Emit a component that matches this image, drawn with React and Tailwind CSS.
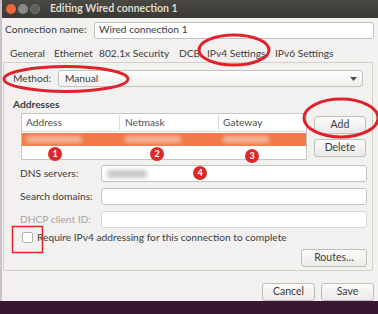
import React from 'react'

const font = { fontFamily: 'Lato, "Open Sans", sans-serif' }

const Field = ({ className = '', children }) => (
  <div className={`h-[17px] rounded-[3px] border border-[#c4c2bd] bg-white ${className}`}>{children}</div>
)

const Button = ({ children, className = '' }) => (
  <div
    className={`flex h-[18px] items-center justify-center rounded-[3px] border border-[#c0beb9] bg-gradient-to-b from-[#fbfbfa] to-[#ebeae8] text-[10.5px] text-[#3c3c3c] ${className}`}
  >
    {children}
  </div>
)

const Marker = ({ n, className }) => (
  <div
    className={`absolute flex h-[14px] w-[14px] items-center justify-center rounded-full bg-[#dc2a2a] text-[9px] font-bold text-white ${className}`}
  >
    {n}
  </div>
)

export default function App() {
  return (
    <div className="relative h-[314px] w-[378px] overflow-hidden whitespace-nowrap bg-[#3b1630]" style={font}>
      <div className="flex h-[301px] flex-col border-l-[2px] border-[#c9c3c8] bg-[#f2f1f0] text-[10.2px] text-[#3c3c3c]">
        {/* title bar */}
        <div className="flex h-[18px] items-center bg-gradient-to-b from-[#4a4944] to-[#3a3935] pl-[4px]">
          <div className="h-[10px] w-[10px] rounded-full bg-[#e9683a]" />
          <div className="ml-[2px] h-[10px] w-[10px] rounded-full bg-[#8a8983]" />
          <div className="ml-[2px] h-[10px] w-[10px] rounded-full border border-[#77766f] bg-[#5e5d58]" />
          <span className="ml-[10px] text-[10.5px] font-bold text-[#dfdbd2]">Editing Wired connection 1</span>
        </div>

        {/* connection name */}
        <div className="mt-[4px] flex items-center pl-[3px] pr-[4px]">
          <span className="w-[89px]">Connection name:</span>
          <Field className="flex flex-1 items-center pl-[4px]">
            <span>Wired connection 1</span>
          </Field>
        </div>

        {/* tabs */}
        <div className="mt-[7px] flex h-[16px] items-center pl-[8px]">
          <span className="w-[44px]">General</span>
          <span className="w-[45px]">Ethernet</span>
          <span className="w-[80px]">802.1x Security</span>
          <span className="w-[28px]">DCB</span>
          <span className="w-[68px]">IPv4 Settings</span>
          <span>IPv6 Settings</span>
        </div>

        {/* panel */}
        <div className="ml-[1px] mt-[1px] flex h-[214px] w-[370px] flex-col rounded-[2px] border border-[#d3d1cc]">
          <div className="mt-[7px] flex items-center pl-[9px] pr-[9px]">
            <span className="w-[45px]">Method:</span>
            <div className="flex h-[17px] flex-1 items-center justify-between rounded-[3px] border border-[#c4c2bd] bg-gradient-to-b from-[#fdfdfc] to-[#f0efed] pl-[6px] pr-[5px]">
              <span>Manual</span>
              <svg width="7" height="4" viewBox="0 0 7 4">
                <path d="M0 0h7L3.5 4z" fill="#4c4c4c" />
              </svg>
            </div>
          </div>

          <div className="mt-[10px] h-[14px] pl-[9px] font-bold">Addresses</div>

          <div className="mt-[2px] flex pl-[17px]">
            <div className="h-[47px] w-[286px] border border-[#c8c6c1] bg-white">
              <div className="flex h-[18px] items-center border-b border-[#dcdad6] text-[#505050]">
                <span className="w-[98px] border-r border-[#dcdad6] pl-[4px]">Address</span>
                <span className="w-[99px] border-r border-[#dcdad6] pl-[5px]">Netmask</span>
                <span className="pl-[4px]">Gateway</span>
              </div>
              <div className="mt-[1px] flex h-[13px] items-center bg-[#ef7a47]">
                <div className="ml-[4px] h-[7px] w-[56px] rounded-[2px] bg-[#f5b59a] blur-[2px]" />
                <div className="ml-[43px] h-[7px] w-[56px] rounded-[2px] bg-[#f5b59a] blur-[2px]" />
                <div className="ml-[42px] h-[7px] w-[46px] rounded-[2px] bg-[#f5b59a] blur-[2px]" />
              </div>
            </div>
            <div className="ml-[7px] flex flex-col gap-[5px] pt-[3px]">
              <Button className="w-[52px]">Add</Button>
              <Button className="w-[52px]">Delete</Button>
            </div>
          </div>

          <div className="mt-[5px] flex flex-col gap-[6px] pl-[16px] pr-[5px]">
            <div className="flex items-center">
              <span className="w-[81px]">DNS servers:</span>
              <Field className="flex flex-1 items-center pl-[5px]">
                <div className="h-[8px] w-[40px] rounded-[2px] bg-[#c7c7c7] blur-[2px]" />
              </Field>
            </div>
            <div className="flex items-center">
              <span className="w-[81px]">Search domains:</span>
              <Field className="flex-1" />
            </div>
            <div className="flex items-center">
              <span className="w-[81px] text-[#a6a5a2]">DHCP client ID:</span>
              <Field className="flex-1 border-[#d8d6d2] bg-[#f6f5f4]" />
            </div>
          </div>

          <div className="mt-[3px] flex h-[13px] items-center pl-[18px]">
            <div className="h-[11px] w-[11px] rounded-[2px] border border-[#b3b1ac] bg-white" />
            <span className="ml-[4px]">Require IPv4 addressing for this connection to complete</span>
          </div>

          <div className="mt-[5px] flex justify-end pr-[5px]">
            <Button className="w-[66px]">Routes…</Button>
          </div>
        </div>

        <div className="mt-[12px] flex justify-end gap-[6px] pr-[4px]">
          <Button className="w-[53px]">Cancel</Button>
          <Button className="w-[53px]">Save</Button>
        </div>
      </div>

      {/* annotations */}
      <svg className="pointer-events-none absolute inset-0" width="378" height="314">
        <ellipse cx="234" cy="50" rx="35" ry="15" fill="none" stroke="#e0232b" strokeWidth="3" />
        <ellipse cx="66" cy="79" rx="62" ry="12.5" fill="none" stroke="#e0232b" strokeWidth="3" />
        <ellipse cx="341" cy="118" rx="37" ry="19" fill="none" stroke="#e0232b" strokeWidth="3" />
        <rect x="12.5" y="226.5" width="30" height="26" fill="none" stroke="#e0232b" strokeWidth="1.5" />
      </svg>
      <Marker n="1" className="left-[48px] top-[147px]" />
      <Marker n="2" className="left-[150px] top-[147px]" />
      <Marker n="3" className="left-[245px] top-[149px]" />
      <Marker n="4" className="left-[193px] top-[166px]" />
    </div>
  )
}
